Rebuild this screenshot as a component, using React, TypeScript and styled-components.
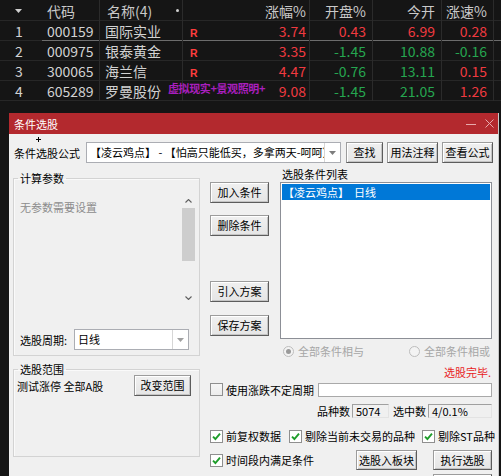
import React from "react";
import styled, { createGlobalStyle } from "styled-components";

const FONT = `"Noto Sans CJK SC", "Noto Sans", "Liberation Sans", sans-serif`;
const RED = "#ef3a40";
const GREEN = "#25a650";

const GlobalStyle = createGlobalStyle`
  html, body { margin: 0; padding: 0; background: #151515; }
  body { width: 501px; height: 476px; overflow: hidden; font-family: ${FONT}; }
  * { box-sizing: border-box; }
`;

const Page = styled.div`
  width: 501px;
  height: 476px;
  overflow: hidden;
  display: flex;
  flex-direction: column;
  background: #151515;
`;

/* ---------- quote table ---------- */
const COLS = "42px 58px 83px 127px 63px 69px 52px 7px";

const QuoteTable = styled.div`
  display: flex;
  flex-direction: column;
  color: #d2d2d2;
  font-size: 14px;
`;

const QRow = styled.div<{ $h: number; $cursor?: boolean }>`
  display: grid;
  grid-template-columns: ${COLS};
  height: ${(p) => p.$h}px;
  background: ${(p) =>
    p.$cursor
      ? "linear-gradient(#6c6c6c,#6c6c6c) 42px 100% / calc(100% - 42px) 1px no-repeat, linear-gradient(#272727,#272727) 0 100% / 100% 1px no-repeat"
      : "linear-gradient(#272727,#272727) 0 100% / 100% 1px no-repeat"};
`;

const QCell = styled.div<{ $justify?: string; $pl?: number; $pr?: number; $sep?: boolean; $color?: string }>`
  display: flex;
  align-items: center;
  justify-content: ${(p) => p.$justify ?? "flex-start"};
  padding-left: ${(p) => p.$pl ?? 0}px;
  padding-right: ${(p) => p.$pr ?? 0}px;
  border-right: ${(p) => (p.$sep ? "1px solid #2b2b2b" : "none")};
  color: ${(p) => p.$color ?? "inherit"};
  white-space: nowrap;
  min-width: 0;
  line-height: 1;
`;

const HeadText = styled.span`
  color: #c9c9c9;
  font-size: 14px;
`;

const HeadDot = styled.span`
  width: 3px;
  height: 3px;
  border-radius: 50%;
  background: #cfcfcf;
`;

const RMark = styled.span`
  color: #ff3d3d;
  font-size: 10.5px;
  font-weight: 700;
  font-family: "Liberation Sans", sans-serif;
  display: inline-block;
  margin-top: 3px;
`;

const Tag = styled.span`
  align-self: flex-start;
  margin-top: 1px;
  margin-left: 7px;
  color: #a91fbd;
  font-size: 11px;
  font-weight: 700;
  letter-spacing: -0.4px;
  line-height: 13px;
`;

/* ---------- dialog ---------- */
const Dialog = styled.div`
  position: relative;
  margin: 12px 0 0 9px;
  width: 490px;
  flex: 1;
  background: #f0f0f0;
  display: flex;
  flex-direction: column;
  font-size: 11px;
  color: #000;
  border-right: 1px solid #c9c9c9;
`;

const TitleBar = styled.div`
  height: 21px;
  flex-shrink: 0;
  background: #b3292e;
  display: flex;
  align-items: center;
  padding: 0 4px 0 5px;
  color: #fff;
  font-size: 11px;
`;

const TitleControls = styled.div`
  margin-left: auto;
  display: flex;
  align-items: center;
  gap: 9px;
`;

const Cursor = styled.span`
  position: absolute;
  left: 27px;
  top: 24px;
  width: 5px;
  height: 5px;
  background: linear-gradient(#000, #000) center / 5px 1px no-repeat, linear-gradient(#000, #000) center / 1px 5px no-repeat;
`;

const Body = styled.div`
  display: flex;
  flex-direction: column;
  padding: 8px 0 0 4px;
`;

const FormulaRow = styled.div`
  display: flex;
  align-items: center;
  height: 21px;
`;

const Label = styled.span<{ $ml?: number; $color?: string }>`
  margin-left: ${(p) => p.$ml ?? 0}px;
  color: ${(p) => p.$color ?? "#000"};
  white-space: nowrap;
  line-height: 14px;
`;

const Combo = styled.div<{ $w: number; $ml?: number }>`
  width: ${(p) => p.$w}px;
  margin-left: ${(p) => p.$ml ?? 0}px;
  height: 21px;
  display: flex;
  background: #fff;
  border: 1px solid #abadb3;
  flex-shrink: 0;
`;

const ComboText = styled.div`
  flex: 1;
  min-width: 0;
  overflow: hidden;
  white-space: nowrap;
  padding-left: 3px;
  line-height: 19px;
`;

const ComboArrow = styled.div`
  width: 16px;
  border-left: 1px solid #d6d6d6;
  display: flex;
  align-items: center;
  justify-content: center;
`;

const Btn = styled.button<{ $w: number; $h?: number; $ml?: number }>`
  width: ${(p) => p.$w}px;
  height: ${(p) => p.$h ?? 21}px;
  margin-left: ${(p) => p.$ml ?? 0}px;
  flex-shrink: 0;
  padding: 0;
  font-family: ${FONT};
  font-size: 11px;
  color: #000;
  background: linear-gradient(#f0f0f0, #e5e5e5);
  border: 1px solid;
  border-color: #9c9c9c #5c5c5c #5c5c5c #9c9c9c;
  box-shadow: inset 1px 1px #ffffff, inset -1px -1px #c4c4c4;
  line-height: 1;
`;

const Main = styled.div`
  display: grid;
  grid-template-columns: 187px 283px;
  column-gap: 10px;
  margin-top: 4px;
`;

const LeftCol = styled.div`
  display: flex;
  flex-direction: column;
  padding-top: 4px;
`;

const Group = styled.fieldset<{ $pad: string; $mt?: number }>`
  margin: ${(p) => p.$mt ?? 0}px 0 0 0;
  padding: ${(p) => p.$pad};
  min-width: 0;
  border: 1px solid #d3d3d3;
  box-shadow: inset 1px 1px #fafafa;
`;

const GroupTitle = styled.legend<{ $ml: number }>`
  padding: 0 2px;
  margin-left: ${(p) => p.$ml}px;
  line-height: 14px;
  font-size: 11px;
`;

const ParamBox = styled.div`
  display: flex;
  height: 112px;
  margin-top: 8px;
`;

const ParamText = styled.div`
  flex: 1;
  padding-top: 7px;
  color: #8c8c8c;
  line-height: 14px;
`;

const ScrollBar = styled.div`
  width: 15px;
  display: flex;
  flex-direction: column;
`;

const ScrollArrow = styled.div`
  height: 15px;
  display: flex;
  align-items: center;
  justify-content: center;
`;

const ScrollThumb = styled.div`
  height: 53px;
  margin: 0 1px;
  background: #cdcdcd;
`;

const ScrollSpace = styled.div`
  flex: 1;
`;

const PeriodRow = styled.div`
  display: flex;
  align-items: center;
  margin-top: 24px;
  height: 21px;
`;

const RangeRow = styled.div`
  display: flex;
  align-items: center;
  justify-content: space-between;
  margin-top: -1px;
  padding-right: 5px;
  height: 21px;
`;

const RightCol = styled.div`
  display: flex;
  flex-direction: column;
`;

const TopGrid = styled.div`
  display: grid;
  grid-template-columns: 59px 212px;
  grid-template-rows: 15px 157px auto;
  column-gap: 11px;
`;

const ListLabel = styled.div`
  grid-column: 2;
  grid-row: 1;
  padding-left: 2px;
  line-height: 14px;
`;

const ButtonCol = styled.div`
  grid-column: 1;
  grid-row: 2;
  display: flex;
  flex-direction: column;
`;

const BtnGap = styled.div<{ $h: number }>`
  height: ${(p) => p.$h}px;
`;

const ListBox = styled.div`
  grid-column: 2;
  grid-row: 2;
  background: #fff;
  border: 1px solid #8c8f96;
  padding: 1px;
`;

const ListItem = styled.div<{ $sel?: boolean }>`
  height: 16px;
  line-height: 16px;
  padding-left: 1px;
  background: ${(p) => (p.$sel ? "#0078d7" : "transparent")};
  color: ${(p) => (p.$sel ? "#fff" : "#000")};
  white-space: pre;
`;

const RadioRow = styled.div`
  grid-column: 2;
  grid-row: 3;
  margin-top: 5px;
  height: 14px;
  display: flex;
  justify-content: space-between;
  align-items: center;
  padding: 0 2px 0 3px;
  color: #a6a6a6;
`;

const RadioItem = styled.span`
  display: inline-flex;
  align-items: center;
  gap: 4px;
  line-height: 14px;
`;

const RadioDot = styled.span<{ $on?: boolean }>`
  width: 11px;
  height: 11px;
  border-radius: 50%;
  border: 1px solid #bdbdbd;
  background: #f3f3f3;
  display: inline-flex;
  align-items: center;
  justify-content: center;
  &::after {
    content: "";
    width: 5px;
    height: 5px;
    border-radius: 50%;
    background: ${(p) => (p.$on ? "#9a9a9a" : "transparent")};
  }
`;

const Status = styled.div`
  margin-top: 7px;
  height: 14px;
  line-height: 14px;
  text-align: right;
  padding-right: 2px;
  color: #e8231f;
`;

const FlexRow = styled.div<{ $mt: number; $h: number; $end?: boolean }>`
  display: flex;
  align-items: center;
  justify-content: ${(p) => (p.$end ? "flex-end" : "flex-start")};
  margin-top: ${(p) => p.$mt}px;
  height: ${(p) => p.$h}px;
  padding-right: 1px;
`;

const PushRight = styled.div`
  margin-left: auto;
  display: flex;
  align-items: center;
`;

const CheckItem = styled.span<{ $ml?: number }>`
  display: inline-flex;
  align-items: center;
  gap: 3px;
  margin-left: ${(p) => p.$ml ?? 0}px;
  white-space: nowrap;
  line-height: 14px;
`;

const CheckBox = styled.span<{ $on?: boolean }>`
  width: 13px;
  height: 13px;
  flex-shrink: 0;
  border: 1px solid #8f8f8f;
  background: ${(p) => (p.$on ? "#fff" : "linear-gradient(#f6f6f6, #ececec)")};
  display: inline-flex;
  align-items: center;
  justify-content: center;
`;

const Edit = styled.div<{ $w: number }>`
  width: ${(p) => p.$w}px;
  height: 14px;
  background: #fff;
  border: 1px solid #a9a9a9;
`;

const ReadBox = styled.div<{ $w: number; $ml?: number }>`
  width: ${(p) => p.$w}px;
  margin-left: ${(p) => p.$ml ?? 0}px;
  height: 14px;
  line-height: 12px;
  padding-left: 3px;
  background: #f0f0f0;
  border: 1px solid;
  border-color: #a0a0a0 #e3e3e3 #e3e3e3 #a0a0a0;
`;

/* ---------- small drawings ---------- */
const DownTri = ({ c = "#7d7d7d" }: { c?: string }) => (
  <svg width="7" height="4" viewBox="0 0 7 4">
    <path d="M0 0 H7 L3.5 4 Z" fill={c} />
  </svg>
);

const Chevron = ({ up }: { up?: boolean }) => (
  <svg width="7" height="4" viewBox="0 0 7 4">
    <path d={up ? "M0.5 3.5 L3.5 0.5 L6.5 3.5" : "M0.5 0.5 L3.5 3.5 L6.5 0.5"} stroke="#5f5f5f" strokeWidth="1.1" fill="none" />
  </svg>
);

const Check = ({ on }: { on?: boolean }) => (
  <CheckBox $on={on}>
    {on && (
      <svg width="9" height="9" viewBox="0 0 9 9">
        <path d="M1 4.6 L3.4 7 L8 1.6" stroke="#1e9d2a" strokeWidth="1.9" fill="none" />
      </svg>
    )}
  </CheckBox>
);

type Q = {
  i: number;
  code: string;
  name: string;
  r?: boolean;
  tag?: string;
  vals: [string, string][];
};

const rows: Q[] = [
  { i: 1, code: "000159", name: "国际实业", r: true, vals: [["3.74", RED], ["0.43", RED], ["6.99", RED], ["0.28", RED]] },
  { i: 2, code: "000975", name: "银泰黄金", r: true, vals: [["3.35", RED], ["-1.45", GREEN], ["10.88", GREEN], ["-0.16", GREEN]] },
  { i: 3, code: "300065", name: "海兰信", r: true, vals: [["4.47", RED], ["-0.76", GREEN], ["13.11", GREEN], ["0.15", RED]] },
  { i: 4, code: "605289", name: "罗曼股份", tag: "虚拟现实+景观照明+", vals: [["9.08", RED], ["-1.45", GREEN], ["21.05", GREEN], ["1.26", RED]] },
];

export default function App() {
  return (
    <>
      <GlobalStyle />
      <Page>
        <QuoteTable>
          <QRow $h={21}>
            <QCell $pl={15}>
              <DownTri c="#d0d0d0" />
            </QCell>
            <QCell $pl={5} $sep>
              <HeadText>代码</HeadText>
            </QCell>
            <QCell $pl={7} $pr={3} $justify="space-between" $sep>
              <HeadText>名称(4)</HeadText>
              <HeadDot />
            </QCell>
            <QCell $pr={3} $justify="flex-end" $sep>
              <HeadText>涨幅%</HeadText>
            </QCell>
            <QCell $pr={6} $justify="flex-end" $sep>
              <HeadText>开盘%</HeadText>
            </QCell>
            <QCell $pr={6} $justify="flex-end" $sep>
              <HeadText>今开</HeadText>
            </QCell>
            <QCell $pr={6} $justify="flex-end" $sep>
              <HeadText>涨速%</HeadText>
            </QCell>
            <QCell />
          </QRow>
          {rows.map((r) => (
            <QRow key={r.i} $h={20} $cursor={r.i === 1}>
              <QCell $pl={15}>{r.i}</QCell>
              <QCell $pl={5} $sep>
                {r.code}
              </QCell>
              <QCell $pl={5} $sep>
                {r.name}
                {r.tag && <Tag>{r.tag}</Tag>}
              </QCell>
              <QCell $pl={7} $pr={3} $justify="space-between" $sep>
                <span>{r.r && <RMark>R</RMark>}</span>
                <span style={{ color: r.vals[0][1] }}>{r.vals[0][0]}</span>
              </QCell>
              <QCell $pr={6} $justify="flex-end" $sep $color={r.vals[1][1]}>
                {r.vals[1][0]}
              </QCell>
              <QCell $pr={6} $justify="flex-end" $sep $color={r.vals[2][1]}>
                {r.vals[2][0]}
              </QCell>
              <QCell $pr={6} $justify="flex-end" $sep $color={r.vals[3][1]}>
                {r.vals[3][0]}
              </QCell>
              <QCell />
            </QRow>
          ))}
        </QuoteTable>

        <Dialog>
          <TitleBar>
            <span>条件选股</span>
            <TitleControls>
              <svg width="10" height="8" viewBox="0 0 10 8">
                <path d="M0 4.5 H10" stroke="#e7aaac" strokeWidth="1" />
              </svg>
              <svg width="9" height="9" viewBox="0 0 9 9">
                <path d="M0.5 0.5 L8.5 8.5 M8.5 0.5 L0.5 8.5" stroke="#e7aaac" strokeWidth="1" />
              </svg>
            </TitleControls>
          </TitleBar>
          <Cursor />
          <Body>
            <FormulaRow>
              <Label $ml={1}>条件选股公式</Label>
              <Combo $w={255} $ml={6}>
                <ComboText>【凌云鸡点】 - 【怕高只能低买，多拿两天-呵呵】</ComboText>
                <ComboArrow>
                  <DownTri />
                </ComboArrow>
              </Combo>
              <Btn $w={37} $ml={5}>查找</Btn>
              <Btn $w={51} $ml={4}>用法注释</Btn>
              <Btn $w={51} $ml={4}>查看公式</Btn>
            </FormulaRow>

            <Main>
              <LeftCol>
                <Group $pad="0 3px 5px 6px">
                  <GroupTitle $ml={-2}>计算参数</GroupTitle>
                  <ParamBox>
                    <ParamText>无参数需要设置</ParamText>
                    <ScrollBar>
                      <ScrollArrow>
                        <Chevron up />
                      </ScrollArrow>
                      <ScrollThumb />
                      <ScrollSpace />
                      <ScrollArrow>
                        <Chevron />
                      </ScrollArrow>
                    </ScrollBar>
                  </ParamBox>
                  <PeriodRow>
                    <Label>选股周期:</Label>
                    <Combo $w={115} $ml={7}>
                      <ComboText>日线</ComboText>
                      <ComboArrow>
                        <DownTri c="#a0a0a0" />
                      </ComboArrow>
                    </Combo>
                  </PeriodRow>
                </Group>
                <Group $pad="0 3px 60px 3px" $mt={6}>
                  <GroupTitle $ml={1}>选股范围</GroupTitle>
                  <RangeRow>
                    <Label>测试涨停 全部A股</Label>
                    <Btn $w={57}>改变范围</Btn>
                  </RangeRow>
                </Group>
              </LeftCol>

              <RightCol>
                <TopGrid>
                  <ListLabel>选股条件列表</ListLabel>
                  <ButtonCol>
                    <Btn $w={59}>加入条件</Btn>
                    <BtnGap $h={12} />
                    <Btn $w={59}>删除条件</Btn>
                    <BtnGap $h={45} />
                    <Btn $w={59}>引入方案</Btn>
                    <BtnGap $h={13} />
                    <Btn $w={59}>保存方案</Btn>
                  </ButtonCol>
                  <ListBox>
                    <ListItem $sel>{"【凌云鸡点】  日线"}</ListItem>
                  </ListBox>
                  <RadioRow>
                    <RadioItem>
                      <RadioDot $on />
                      全部条件相与
                    </RadioItem>
                    <RadioItem>
                      <RadioDot />
                      全部条件相或
                    </RadioItem>
                  </RadioRow>
                </TopGrid>

                <Status>选股完毕.</Status>

                <FlexRow $mt={3} $h={15}>
                  <CheckItem>
                    <Check />
                    使用涨跌不定周期
                  </CheckItem>
                  <PushRight>
                    <Edit $w={174} />
                  </PushRight>
                </FlexRow>

                <FlexRow $mt={6} $h={15} $end>
                  <Label>品种数</Label>
                  <ReadBox $w={37} $ml={2}>5074</ReadBox>
                  <Label $ml={4}>选中数</Label>
                  <ReadBox $w={64} $ml={2}>4/0.1%</ReadBox>
                </FlexRow>

                <FlexRow $mt={11} $h={14}>
                  <CheckItem>
                    <Check on />
                    前复权数据
                  </CheckItem>
                  <CheckItem $ml={8}>
                    <Check on />
                    剔除当前未交易的品种
                  </CheckItem>
                  <CheckItem $ml={7}>
                    <Check on />
                    剔除ST品种
                  </CheckItem>
                </FlexRow>

                <FlexRow $mt={7} $h={20}>
                  <CheckItem>
                    <Check on />
                    时间段内满足条件
                  </CheckItem>
                  <PushRight>
                    <Btn $w={61} $h={20}>
                      选股入板块
                    </Btn>
                    <Btn $w={59} $h={20} $ml={16}>
                      执行选股
                    </Btn>
                  </PushRight>
                </FlexRow>

                <FlexRow $mt={4} $h={20} $end>
                  <Btn $w={59} $h={20} aria-label="关闭" />
                </FlexRow>
              </RightCol>
            </Main>
          </Body>
        </Dialog>
      </Page>
    </>
  );
}
